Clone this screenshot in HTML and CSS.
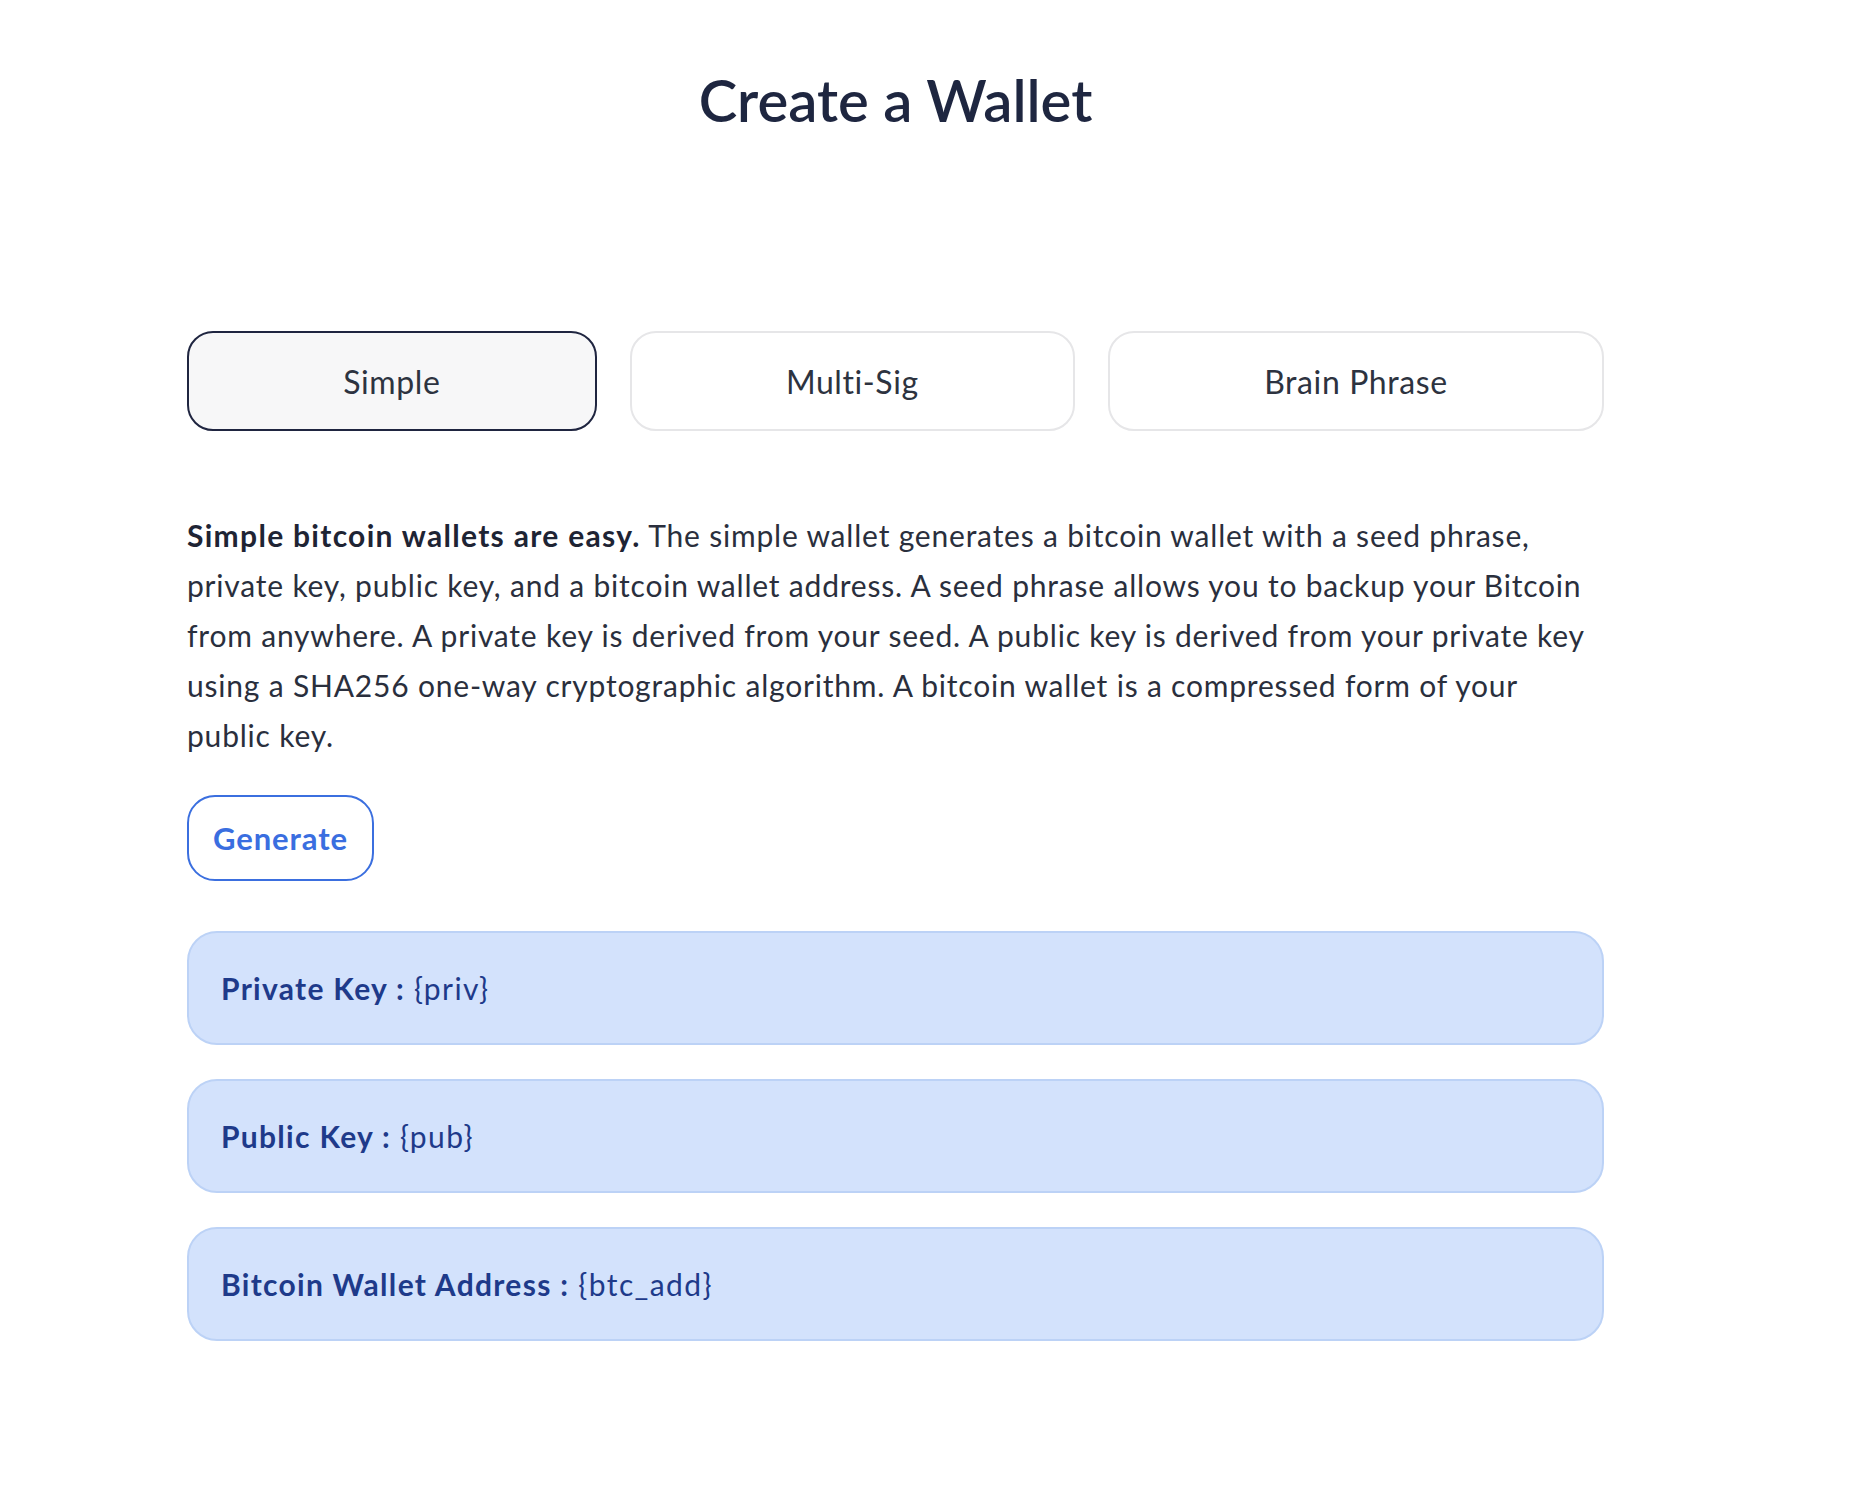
FILE: index.html
```html
<!DOCTYPE html>
<html lang="en">
<head>
<meta charset="utf-8">
<title>Create a Wallet</title>
<link rel="stylesheet" href="styles.css">
</head>
<body>
<main class="page">
  <h1 class="title">Create a Wallet</h1>
  <div class="tabs">
    <button class="tab tab-active">Simple</button>
    <button class="tab">Multi-Sig</button>
    <button class="tab">Brain Phrase</button>
  </div>
  <p class="desc"><strong>Simple bitcoin wallets are easy.</strong> The simple wallet generates a bitcoin wallet with a seed phrase, private key, public key, and a bitcoin wallet address. A seed phrase allows you to backup your Bitcoin from anywhere. A private key is derived from your seed. A public key is derived from your private key using a SHA256 one-way cryptographic algorithm. A bitcoin wallet is a compressed form of your public key.</p>
  <button class="generate">Generate</button>
  <div class="results">
    <div class="result"><strong>Private Key :</strong>&nbsp;{priv}</div>
    <div class="result"><strong>Public Key :</strong>&nbsp;{pub}</div>
    <div class="result"><strong>Bitcoin Wallet Address :</strong>&nbsp;{btc_add}</div>
  </div>
</main>
</body>
</html>
```
FILE: styles.css
```css
* { box-sizing: border-box; }
body {
  margin: 0;
  background: #ffffff;
  font-family: Lato, "Open Sans", "Liberation Sans", sans-serif;
  color: #2a2f3d;
}
.page {
  width: 1417px;
  margin-left: 187px;
  display: flex;
  flex-direction: column;
  align-items: flex-start;
}
.title {
  align-self: stretch;
  text-align: center;
  margin: 65px 0 0;
  font-size: 58px;
  line-height: 69px;
  font-weight: 600;
  letter-spacing: 0;
  color: #1e2640;
}
.tabs {
  align-self: stretch;
  display: flex;
  gap: 33px;
  margin-top: 197px;
}
.tab {
  flex: 1 1 auto;
  height: 100px;
  border: 2px solid #e6e6e8;
  border-radius: 26px;
  background: #ffffff;
  font-family: inherit;
  font-size: 32px;
  letter-spacing: 0.6px;
  color: #2d3340;
  cursor: pointer;
}
.tab-active {
  background: #f7f7f8;
  border-color: #1f2540;
}
.desc {
  margin: 79px 0 0;
  font-size: 30px;
  line-height: 50px;
  letter-spacing: 0.8px;
  color: #2a2f3d;
}
.desc strong { color: #1e2434; font-weight: 700; letter-spacing: 1.3px; }
.generate {
  margin-top: 35px;
  height: 86px;
  padding: 0 24px;
  border: 2px solid #3b6fdf;
  border-radius: 28px;
  background: #ffffff;
  color: #3a6ee0;
  font-family: inherit;
  font-size: 31px;
  font-weight: 700;
  letter-spacing: 0.9px;
  cursor: pointer;
}
.results {
  align-self: stretch;
  display: flex;
  flex-direction: column;
  gap: 34px;
  margin-top: 50px;
}
.result {
  height: 114px;
  display: flex;
  align-items: center;
  padding: 0 32px;
  background: #d3e2fc;
  border: 2px solid #bcd2f6;
  border-radius: 30px;
  color: #1e3a8a;
  font-size: 30px;
  letter-spacing: 1.4px;
}
.result strong { font-weight: 700; letter-spacing: 1.3px; }
```
